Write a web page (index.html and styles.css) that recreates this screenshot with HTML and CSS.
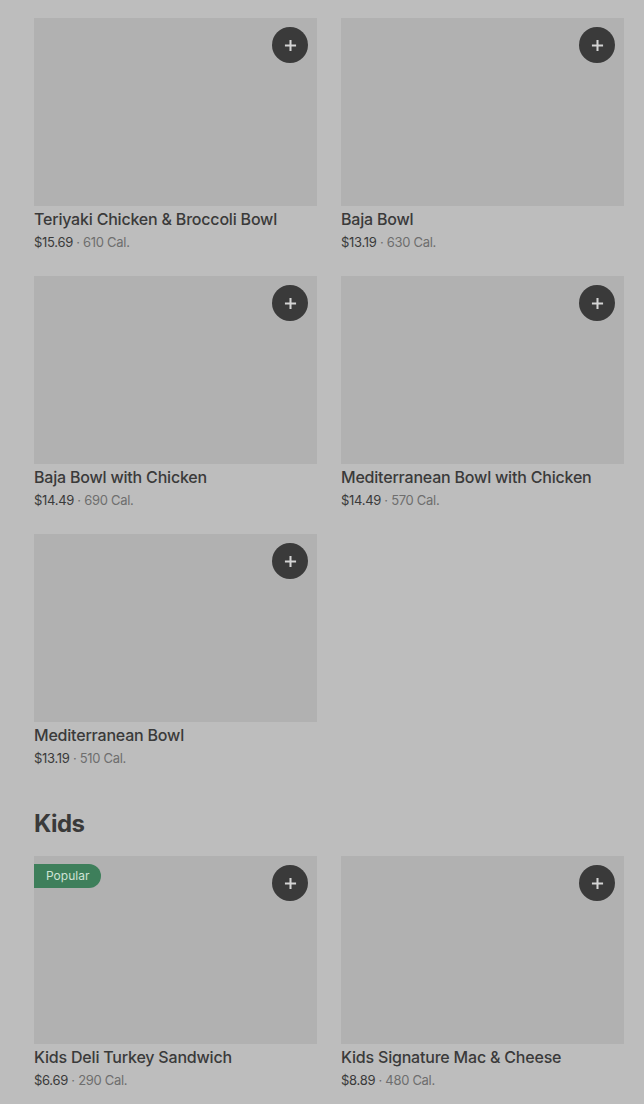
FILE: index.html
```html
<!DOCTYPE html>
<html lang="en">
<head>
    <meta charset="UTF-8">
    <meta name="viewport" content="width=device-width, initial-scale=1.0">
    <title>Menu</title>
    <link rel="stylesheet" href="styles.css">
</head>
<body>

    <!-- Bowls -->
    <div class="grade">
        <div class="item">
            <div class="foto"><button class="add"><svg viewBox="0 0 14 14"><path d="M7 1v12M1 7h12"/></svg></button></div>
            <div class="nome">Teriyaki Chicken &amp; Broccoli Bowl</div>
            <div class="preco">$15.69 <span class="cal">&middot; 610 Cal.</span></div>
        </div>
        <div class="item">
            <div class="foto"><button class="add"><svg viewBox="0 0 14 14"><path d="M7 1v12M1 7h12"/></svg></button></div>
            <div class="nome">Baja Bowl</div>
            <div class="preco">$13.19 <span class="cal">&middot; 630 Cal.</span></div>
        </div>
        <div class="item">
            <div class="foto"><button class="add"><svg viewBox="0 0 14 14"><path d="M7 1v12M1 7h12"/></svg></button></div>
            <div class="nome">Baja Bowl with Chicken</div>
            <div class="preco">$14.49 <span class="cal">&middot; 690 Cal.</span></div>
        </div>
        <div class="item">
            <div class="foto"><button class="add"><svg viewBox="0 0 14 14"><path d="M7 1v12M1 7h12"/></svg></button></div>
            <div class="nome">Mediterranean Bowl with Chicken</div>
            <div class="preco">$14.49 <span class="cal">&middot; 570 Cal.</span></div>
        </div>
        <div class="item">
            <div class="foto"><button class="add"><svg viewBox="0 0 14 14"><path d="M7 1v12M1 7h12"/></svg></button></div>
            <div class="nome">Mediterranean Bowl</div>
            <div class="preco">$13.19 <span class="cal">&middot; 510 Cal.</span></div>
        </div>
    </div>

    <!-- Kids -->
    <h2 class="secao">Kids</h2>
    <div class="grade">
        <div class="item">
            <div class="foto">
                <span class="selo">Popular</span>
                <button class="add"><svg viewBox="0 0 14 14"><path d="M7 1v12M1 7h12"/></svg></button>
            </div>
            <div class="nome">Kids Deli Turkey Sandwich</div>
            <div class="preco">$6.69 <span class="cal">&middot; 290 Cal.</span></div>
        </div>
        <div class="item">
            <div class="foto"><button class="add"><svg viewBox="0 0 14 14"><path d="M7 1v12M1 7h12"/></svg></button></div>
            <div class="nome">Kids Signature Mac &amp; Cheese</div>
            <div class="preco">$8.89 <span class="cal">&middot; 480 Cal.</span></div>
        </div>
    </div>

</body>
</html>
```

FILE: styles.css
```css
* {
    margin: 0;
    padding: 0;
    box-sizing: border-box;
}

body {
    font-family: 'Inter', 'Roboto', sans-serif;
    background-color: #bdbdbd;
    color: #3b3b3b;
    padding: 18px 20px 0 34px;
    overflow: hidden;
}

.grade {
    display: grid;
    grid-template-columns: 283px 283px;
    column-gap: 24px;
    row-gap: 24px;
}

.item {
    display: flex;
    flex-direction: column;
}

.foto {
    position: relative;
    height: 188px;
    background-color: #b1b1b1;
}

.add {
    position: absolute;
    top: 9px;
    right: 9px;
    width: 36px;
    height: 36px;
    border-radius: 50%;
    border: none;
    background-color: #3a3a3a;
    display: flex;
    align-items: center;
    justify-content: center;
}

.add svg {
    width: 13px;
    height: 13px;
    stroke: #d4d4d4;
    stroke-width: 2.2;
    fill: none;
}

.selo {
    position: absolute;
    top: 8px;
    left: 0;
    height: 24px;
    padding: 0 12px;
    border-radius: 0 12px 12px 0;
    background-color: #3e7f5b;
    color: #cfe3d6;
    font-size: 12px;
    line-height: 24px;
}

.nome {
    margin-top: 2px;
    font-size: 16px;
    font-weight: 500;
    line-height: 22px;
    letter-spacing: -0.2px;
    color: #3a3a3a;
}

.preco {
    margin-top: 2px;
    font-size: 13px;
    line-height: 20px;
    letter-spacing: -0.3px;
    color: #3a3a3a;
}

.cal {
    color: #6e6e6e;
}

.secao {
    margin: 41px 0 17px;
    font-size: 24px;
    font-weight: 700;
    line-height: 30px;
    letter-spacing: -0.5px;
    color: #3a3a3a;
}
```
